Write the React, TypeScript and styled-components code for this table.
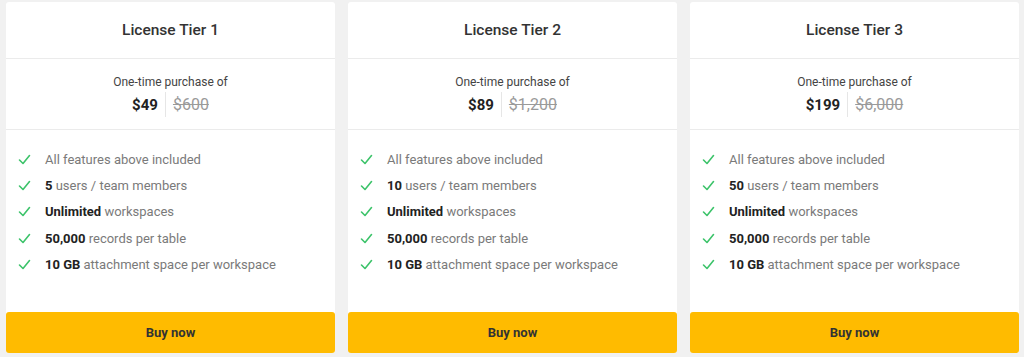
import React from 'react';
import styled, { createGlobalStyle } from 'styled-components';

const GlobalStyle = createGlobalStyle`
  html, body {
    margin: 0;
    padding: 0;
    background: #f1f1f1;
  }
  body {
    font-family: Roboto, 'Liberation Sans', sans-serif;
    -webkit-font-smoothing: antialiased;
  }
`;

const Page = styled.div`
  display: grid;
  grid-template-columns: repeat(3, 329px);
  column-gap: 13px;
  padding: 2px 5px 0 6px;
  height: 357px;
  box-sizing: border-box;
  overflow: hidden;
`;

const Card = styled.div`
  display: flex;
  flex-direction: column;
  background: #fff;
  height: 351px;
  border-radius: 3px;
`;

const Header = styled.div`
  height: 56px;
  display: flex;
  align-items: center;
  justify-content: center;
  border-bottom: 1px solid #ebebeb;
`;

const Title = styled.h2`
  margin: 0;
  font-size: 15.5px;
  font-weight: 500;
  color: #333;
`;

const PriceBox = styled.div`
  height: 71px;
  box-sizing: border-box;
  padding-top: 4px;
  display: flex;
  flex-direction: column;
  align-items: center;
  justify-content: center;
  gap: 3px;
  border-bottom: 1px solid #ebebeb;
`;

const Caption = styled.div`
  font-size: 12px;
  color: #444;
`;

const PriceRow = styled.div`
  display: flex;
  align-items: center;
`;

const Price = styled.span<{ old?: boolean }>`
  padding: 3px 7px;
  ${(p) =>
    p.old
      ? `
    font-size: 16px;
    color: #9a9a9a;
    text-decoration: line-through;
    border-left: 1px solid #e6e6e6;
  `
      : `
    font-size: 15px;
    color: #222;
    font-weight: 700;
  `}
`;

const Features = styled.ul`
  list-style: none;
  margin: 0;
  padding: 20px 0 0 12px;
  flex: 1;
  display: flex;
  flex-direction: column;
  gap: 7.2px;
`;

const Feature = styled.li`
  display: flex;
  align-items: center;
  gap: 14px;
  font-size: 13px;
  line-height: 19px;
  color: #7a7a7a;
  b {
    color: #222;
    font-weight: 700;
  }
`;

const Check = styled.svg`
  width: 13px;
  height: 13px;
  flex-shrink: 0;
`;

const BuyButton = styled.button`
  height: 41px;
  border: none;
  border-radius: 3px;
  background: #ffbb00;
  color: #333;
  font-family: inherit;
  font-size: 13px;
  font-weight: 700;
  cursor: pointer;
`;

const tiers = [
  { n: 1, price: '$49', old: '$600', users: '5' },
  { n: 2, price: '$89', old: '$1,200', users: '10' },
  { n: 3, price: '$199', old: '$6,000', users: '50' },
];

const Tick = () => (
  <Check viewBox="0 0 13 13">
    <path d="M1.5 7 L5 10.5 L11.5 2.5" fill="none" stroke="#3cc36a" strokeWidth="1.6" strokeLinecap="round" strokeLinejoin="round" />
  </Check>
);

export default function App() {
  return (
    <>
      <GlobalStyle />
      <Page>
        {tiers.map((t) => (
          <Card key={t.n}>
            <Header>
              <Title>License Tier {t.n}</Title>
            </Header>
            <PriceBox>
              <Caption>One-time purchase of</Caption>
              <PriceRow>
                <Price>{t.price}</Price>
                <Price old>{t.old}</Price>
              </PriceRow>
            </PriceBox>
            <Features>
              <Feature><Tick />All features above included</Feature>
              <Feature><Tick /><span><b>{t.users}</b> users / team members</span></Feature>
              <Feature><Tick /><span><b>Unlimited</b> workspaces</span></Feature>
              <Feature><Tick /><span><b>50,000</b> records per table</span></Feature>
              <Feature><Tick /><span><b>10 GB</b> attachment space per workspace</span></Feature>
            </Features>
            <BuyButton>Buy now</BuyButton>
          </Card>
        ))}
      </Page>
    </>
  );
}
